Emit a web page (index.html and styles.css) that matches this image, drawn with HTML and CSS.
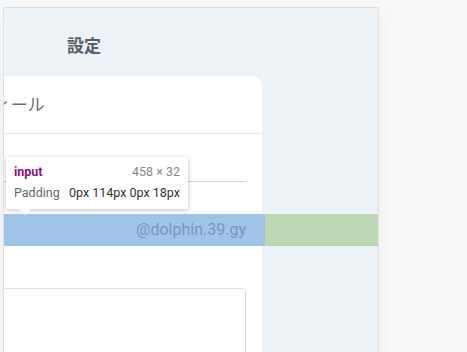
FILE: index.html
```html
<!DOCTYPE html>
<html lang="ja">
<head>
    <meta charset="UTF-8">
    <title>設定</title>
    <link rel="stylesheet" href="styles.css">
</head>
<body>
    <div class="panel">
        <div class="column">
            <h1 class="title">設定</h1>
            <div class="card">
                <div class="card-header">プロフィール</div>
                <div class="card-body">
                    <div class="field-line"></div>
                    <div class="input-row">
                        <div class="hl-content">@dolphin.39.gy</div>
                        <div class="hl-padding"></div>
                    </div>
                    <div class="textarea"></div>
                </div>
            </div>
        </div>

        <div class="tooltip">
            <div class="tip-row">
                <span class="tip-tag">input</span>
                <span class="tip-size">458 × 32</span>
            </div>
            <div class="tip-row">
                <span class="tip-label">Padding</span>
                <span class="tip-value">0px 114px 0px 18px</span>
            </div>
        </div>
    </div>
</body>
</html>
```

FILE: styles.css
```css
body {
    margin: 0;
    padding: 7px 0 0 3px;
    background-color: #f9f9f9;
    font-family: "Noto Sans CJK JP", "Noto Sans", sans-serif;
    height: 345px;
    overflow: hidden;
}
.panel {
    position: relative;
    width: 374px;
    height: 400px;
    background-color: #edf2f7;
    border: 1px solid #e0e0e0;
    box-shadow: 0 0 18px rgba(0, 0, 0, 0.05);
    overflow: hidden;
}
.column {
    width: 356px;
    margin-left: -98px;
}
.title {
    margin: 0;
    padding: 26px 0 0;
    height: 42px;
    text-align: center;
    font-size: 17px;
    font-weight: bold;
    line-height: 22px;
    color: #56606b;
}
.card {
    background-color: #fff;
    border-radius: 10px;
}
.card-header {
    height: 57px;
    line-height: 56px;
    padding-left: 37px;
    font-size: 17px;
    color: #6b7075;
    border-bottom: 1px solid #e6e6e6;
}
.card-body {
    padding: 47px 16px 0;
}
.field-line {
    border-top: 1px solid #d2d2d2;
}
.input-row {
    display: flex;
    height: 32px;
    margin: 32px -133px 0 -2px;
}
.hl-content {
    flex: 1;
    background-color: #a0c4e8;
    text-align: right;
    padding-right: 19px;
    font-family: Roboto, sans-serif;
    font-size: 16px;
    line-height: 32px;
    color: #7598bd;
}
.hl-padding {
    width: 114px;
    background-color: #bcd9b3;
}
.textarea {
    margin-top: 42px;
    height: 120px;
    border: 1px solid #dde1e5;
    border-radius: 3px;
}
.tooltip {
    position: absolute;
    left: 2px;
    top: 149px;
    width: 166px;
    padding: 5px 8px 6px;
    background-color: #fff;
    border-radius: 3px;
    box-shadow: 0 1px 5px rgba(0, 0, 0, 0.25);
    font-family: Roboto, sans-serif;
    font-size: 12.5px;
}
.tooltip:after {
    content: "";
    position: absolute;
    left: 13px;
    bottom: -6px;
    border-left: 6px solid transparent;
    border-right: 6px solid transparent;
    border-top: 6px solid #fff;
}
.tip-row {
    display: flex;
    justify-content: space-between;
    line-height: 20px;
}
.tip-row + .tip-row {
    margin-top: 1px;
}
.tip-tag {
    color: #881280;
    font-weight: bold;
}
.tip-size {
    color: #888;
}
.tip-label {
    color: #666;
}
.tip-value {
    color: #333;
}
```
